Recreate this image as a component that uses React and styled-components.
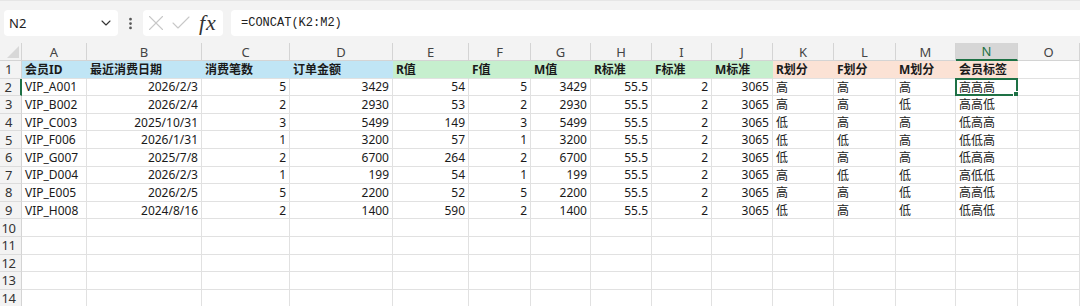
import React from 'react'
import styled, {createGlobalStyle} from 'styled-components'
import {ChevronDown, EllipsisVertical, X, Check} from 'lucide-react'

const GlobalStyle = createGlobalStyle`
  html, body { margin: 0; padding: 0; background: #fff; }
  body { font-family: "Noto Sans", "Noto Sans CJK SC", sans-serif; overflow: hidden; }
  * { box-sizing: border-box; }
`

const widths = [22, 65, 115, 88, 103, 76, 62, 60, 61, 60, 61, 61, 62, 60, 62, 62]
const letters = ['A','B','C','D','E','F','G','H','I','J','K','L','M','N','O']

const BLUE = '#c0e5f5'
const GREEN = '#c6efce'
const PEACH = '#fbe2d5'

const headers = ['会员ID','最近消费日期','消费笔数','订单金额','R值','F值','M值','R标准','F标准','M标准','R划分','F划分','M划分','会员标签']
const headerFill = i => (i < 4 ? BLUE : i < 10 ? GREEN : PEACH)

const rows = [
  ['VIP_A001','2026/2/3',5,3429,54,5,3429,55.5,2,3065,'高','高','高','高高高'],
  ['VIP_B002','2026/2/4',2,2930,53,2,2930,55.5,2,3065,'高','高','低','高高低'],
  ['VIP_C003','2025/10/31',3,5499,149,3,5499,55.5,2,3065,'低','高','高','低高高'],
  ['VIP_F006','2026/1/31',1,3200,57,1,3200,55.5,2,3065,'低','低','高','低低高'],
  ['VIP_G007','2025/7/8',2,6700,264,2,6700,55.5,2,3065,'低','高','高','低高高'],
  ['VIP_D004','2026/2/3',1,199,54,1,199,55.5,2,3065,'高','低','低','高低低'],
  ['VIP_E005','2026/2/5',5,2200,52,5,2200,55.5,2,3065,'高','高','低','高高低'],
  ['VIP_H008','2024/8/16',2,1400,590,2,1400,55.5,2,3065,'低','高','低','低高低'],
]

const Toolbar = styled.div`
  height: 43px;
  background: #f3f3f3;
  display: flex;
  align-items: flex-start;
  padding: 9px 0 0 4px;
  border-top: 1px solid #e6e6e6;
`

const NameBox = styled.div`
  width: 114px;
  height: 26px;
  background: #fff;
  border-radius: 4px;
  display: flex;
  align-items: center;
  justify-content: space-between;
  padding: 0 4px 0 5px;
  font-size: 13px;
  color: #222;
`

const Dots = styled.div`
  width: 25px;
  height: 26px;
  display: flex;
  align-items: center;
  justify-content: center;
  color: #555;
`

const FxGroup = styled.div`
  width: 80px;
  height: 26px;
  background: #fff;
  border-radius: 4px;
  display: flex;
  align-items: center;
  color: #c8c8c8;
`

const FxLabel = styled.span`
  font-family: "Liberation Serif", "DejaVu Serif", serif;
  font-style: italic;
  font-size: 22px;
  color: #333;
  margin-left: 6px;
  line-height: 1;
  letter-spacing: 1px;
`

const Formula = styled.div`
  flex: 1;
  height: 26px;
  margin-left: 8px;
  background: #fff;
  border-radius: 4px 0 0 4px;
  display: flex;
  align-items: center;
  padding-left: 10px;
  font-family: "Liberation Mono", "DejaVu Sans Mono", monospace;
  font-size: 12px;
  color: #222;
`

const Sheet = styled.div`
  display: grid;
  grid-template-columns: ${widths.map(w => w + 'px').join(' ')};
  grid-template-rows: 18px repeat(14, 17.6px);
`

const Corner = styled.div`
  background: #f3f3f3;
  border-right: 1px solid #d4d4d4;
  border-bottom: 1px solid #d4d4d4;
  position: relative;
  &::after {
    content: '';
    position: absolute;
    right: 2px;
    bottom: 2px;
    border-left: 12px solid transparent;
    border-bottom: 12px solid #d8d8d8;
  }
`

const ColHead = styled.div`
  background: ${p => (p.$active ? '#d6d6d6' : '#f3f3f3')};
  border-right: 1px solid #d4d4d4;
  border-bottom: ${p => (p.$active ? '2px solid #1e7145' : '1px solid #d4d4d4')};
  color: ${p => (p.$active ? '#1e7145' : '#444')};
  font-size: 13px;
  display: flex;
  align-items: center;
  justify-content: center;
`

const RowHead = styled.div`
  background: #f3f3f3;
  border-right: ${p => (p.$active ? '2px solid #1e7145' : '1px solid #d4d4d4')};
  border-bottom: 1px solid #dcdcdc;
  color: #333;
  font-size: 13px;
  display: flex;
  align-items: center;
  justify-content: center;
  padding-right: 4px;
  letter-spacing: -0.5px;
`

const Cell = styled.div`
  position: relative;
  background: ${p => p.$fill || '#fff'};
  border-right: 1px solid ${p => p.$fill || '#e1e1e1'};
  border-bottom: 1px solid #e1e1e1;
  display: flex;
  align-items: center;
  justify-content: ${p => (p.$num ? 'flex-end' : 'flex-start')};
  padding: 0 3px;
  font-size: 12px;
  font-weight: ${p => (p.$bold ? 700 : 400)};
  color: #1a1a1a;
  white-space: nowrap;
  overflow: visible;
`

const Selection = styled.div`
  position: absolute;
  left: -1px;
  top: -1px;
  right: -1px;
  bottom: -1px;
  border: 2px solid #1e7145;
  pointer-events: none;
  &::after {
    content: '';
    position: absolute;
    right: -4px;
    bottom: -4px;
    width: 5px;
    height: 5px;
    background: #1e7145;
    border: 1px solid #fff;
  }
`

function App() {
  return (
    <>
      <GlobalStyle />
      <Toolbar>
        <NameBox>
          <span>N2</span>
          <ChevronDown size={16} color="#333" strokeWidth={1.6} />
        </NameBox>
        <Dots><EllipsisVertical size={15} strokeWidth={2.4} /></Dots>
        <FxGroup>
          <X size={26} strokeWidth={1} />
          <Check size={24} strokeWidth={1.1} />
          <FxLabel>fx</FxLabel>
        </FxGroup>
        <Formula>=CONCAT(K2:M2)</Formula>
      </Toolbar>
      <Sheet>
        <Corner />
        {letters.map(l => (
          <ColHead key={l} $active={l === 'N'}>{l}</ColHead>
        ))}
        <RowHead>1</RowHead>
        {letters.map((l, i) =>
          i < headers.length ? (
            <Cell key={l} $fill={headerFill(i)} $bold>{headers[i]}</Cell>
          ) : (
            <Cell key={l} />
          )
        )}
        {rows.map((r, ri) => (
          <React.Fragment key={ri}>
            <RowHead $active={ri === 0}>{ri + 2}</RowHead>
            {letters.map((l, ci) => {
              const v = r[ci]
              const num = ci === 1 || (ci > 1 && ci < 10)
              return (
                <Cell key={l} $num={num}>
                  {v}
                  {ri === 0 && l === 'N' && <Selection />}
                </Cell>
              )
            })}
          </React.Fragment>
        ))}
        {[10, 11, 12, 13, 14].map(n => (
          <React.Fragment key={n}>
            <RowHead>{n}</RowHead>
            {letters.map(l => <Cell key={l} />)}
          </React.Fragment>
        ))}
      </Sheet>
    </>
  )
}

export default App
